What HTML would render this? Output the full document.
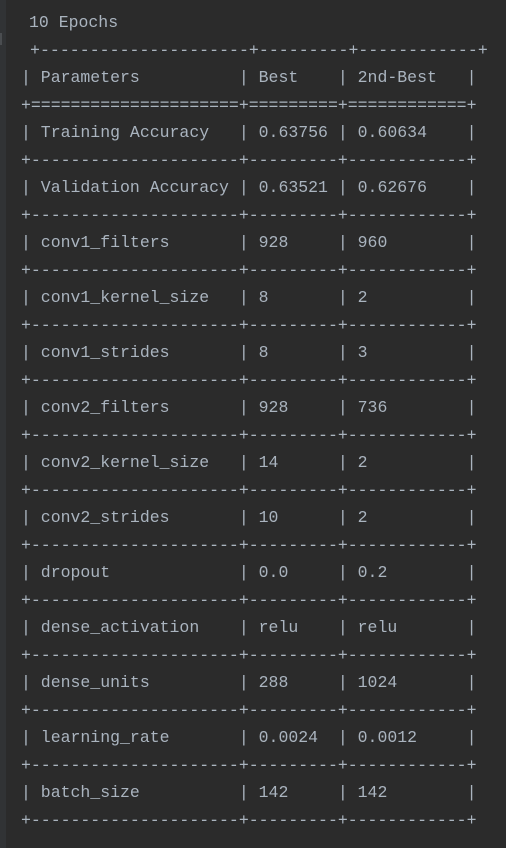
<!DOCTYPE html>
<html><head><meta charset="utf-8"><style>
html,body{margin:0;padding:0;background:#2b2b2b;width:506px;height:848px;overflow:hidden;}
.strip{position:absolute;left:0;top:0;width:6px;height:848px;background:#313335;}
.mark{position:absolute;left:0;top:33px;width:2px;height:12px;background:#4a4d50;}
pre{position:absolute;left:21px;top:9px;margin:0;font-family:"Liberation Mono",monospace;font-size:16.5px;line-height:27.5px;color:#aab4bf;}
.t{display:block;margin-left:8px;}
.t2{display:block;margin-left:9px;letter-spacing:0.05px;}
</style></head><body>
<div class="strip"></div><div class="mark"></div>
<pre><span class="t">10 Epochs</span><span class="t2">+---------------------+---------+------------+</span>| Parameters          | Best    | 2nd-Best   |
+=====================+=========+============+
| Training Accuracy   | 0.63756 | 0.60634    |
+---------------------+---------+------------+
| Validation Accuracy | 0.63521 | 0.62676    |
+---------------------+---------+------------+
| conv1_filters       | 928     | 960        |
+---------------------+---------+------------+
| conv1_kernel_size   | 8       | 2          |
+---------------------+---------+------------+
| conv1_strides       | 8       | 3          |
+---------------------+---------+------------+
| conv2_filters       | 928     | 736        |
+---------------------+---------+------------+
| conv2_kernel_size   | 14      | 2          |
+---------------------+---------+------------+
| conv2_strides       | 10      | 2          |
+---------------------+---------+------------+
| dropout             | 0.0     | 0.2        |
+---------------------+---------+------------+
| dense_activation    | relu    | relu       |
+---------------------+---------+------------+
| dense_units         | 288     | 1024       |
+---------------------+---------+------------+
| learning_rate       | 0.0024  | 0.0012     |
+---------------------+---------+------------+
| batch_size          | 142     | 142        |
+---------------------+---------+------------+</pre>
</body></html>
